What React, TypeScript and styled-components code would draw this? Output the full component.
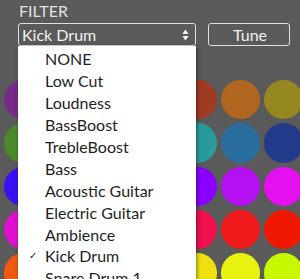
import React from 'react';
import styled, { createGlobalStyle } from 'styled-components';

const Global = createGlobalStyle`
  html, body { margin: 0; padding: 0; background: #5a5a5a; overflow: hidden; }
  body { font-family: Lato, "Open Sans", sans-serif; }
`;

const Page = styled.div`
  position: relative;
  width: 300px;
  height: 279px;
  overflow: hidden;
  background: #5a5a5a;
`;

const Header = styled.div`
  height: 80px;
  box-sizing: border-box;
  padding: 2px 0 0 18px;
  display: flex;
  flex-direction: column;
  gap: 3px;
`;

const Label = styled.div`
  color: #e2e2e2;
  font-size: 16px;
  line-height: 18px;
  padding-left: 1px;
`;

const Controls = styled.div`
  display: flex;
  gap: 12px;
`;

const Select = styled.div`
  width: 178px;
  height: 23px;
  box-sizing: border-box;
  border: 1px solid #e0e0e0;
  border-radius: 3px;
  display: flex;
  align-items: center;
  justify-content: space-between;
  padding: 0 6px 0 3px;
  color: #f2f2f2;
  font-size: 16px;
`;

const Button = styled.div`
  width: 82px;
  height: 23px;
  box-sizing: border-box;
  border: 1px solid #e0e0e0;
  border-radius: 3px;
  display: flex;
  align-items: center;
  justify-content: center;
  padding-left: 2px;
  color: #f2f2f2;
  font-size: 16px;
`;

const Grid = styled.div`
  display: grid;
  grid-template-columns: repeat(7, 39.33px);
  grid-auto-rows: 39.33px;
  gap: 4px;
  padding-left: 4px;
`;

const Dot = styled.div<{ $c: string }>`
  border-radius: 50%;
  background: ${(p) => p.$c};
`;

const Menu = styled.div`
  position: absolute;
  left: 18px;
  top: 46px;
  width: 178px;
  background: #ffffff;
  padding-top: 2px;
  box-shadow: 1px 1px 4px rgba(0, 0, 0, 0.45);
`;

const Item = styled.div`
  display: flex;
  align-items: center;
  height: 21.9px;
  color: #1e1e1e;
  font-size: 16px;
  white-space: nowrap;
`;

const Check = styled.span`
  width: 27px;
  box-sizing: border-box;
  padding-left: 11px;
  font-size: 10px;
  font-family: "DejaVu Sans", sans-serif;
  color: #222;
`;

const colors: string[][] = [
  ['#782a88', '#85286f', '#8e2a55', '#983035', '#a03a22', '#b0661f', '#968820'],
  ['#4a8a2a', '#3a8f45', '#2e9465', '#2a9785', '#2a9a9a', '#2a6ea0', '#233a8a'],
  ['#3a10f2', '#5208f5', '#6a04f8', '#7a02fb', '#8a00ff', '#b410f2', '#e410f0'],
  ['#e010d0', '#e810a8', '#ec1080', '#ef1064', '#f01050', '#f01a1c', '#f01800'],
  ['#f05a10', '#f07a10', '#f0a010', '#f0c810', '#f0e010', '#e8f210', '#c8f800'],
];

const items = [
  'NONE',
  'Low Cut',
  'Loudness',
  'BassBoost',
  'TrebleBoost',
  'Bass',
  'Acoustic Guitar',
  'Electric Guitar',
  'Ambience',
  'Kick Drum',
  'Snare Drum 1',
  'Snare Drum 2',
];

const Arrows = () => (
  <svg width="7" height="12" viewBox="0 0 7 12">
    <path d="M3.5 0.5 L6.6 5 L0.4 5 Z" fill="#f2f2f2" />
    <path d="M3.5 11.5 L6.6 7 L0.4 7 Z" fill="#f2f2f2" />
  </svg>
);

export default function App() {
  return (
    <Page>
      <Global />
      <Header>
        <Label>FILTER</Label>
        <Controls>
          <Select>
            <span>Kick Drum</span>
            <Arrows />
          </Select>
          <Button>Tune</Button>
        </Controls>
      </Header>
      <Grid>
        {colors.flatMap((row, r) => row.map((c, i) => <Dot key={`${r}-${i}`} $c={c} />))}
      </Grid>
      <Menu>
        {items.map((it) => (
          <Item key={it}>
            <Check>{it === 'Kick Drum' ? '✓' : ''}</Check>
            {it}
          </Item>
        ))}
      </Menu>
    </Page>
  );
}
